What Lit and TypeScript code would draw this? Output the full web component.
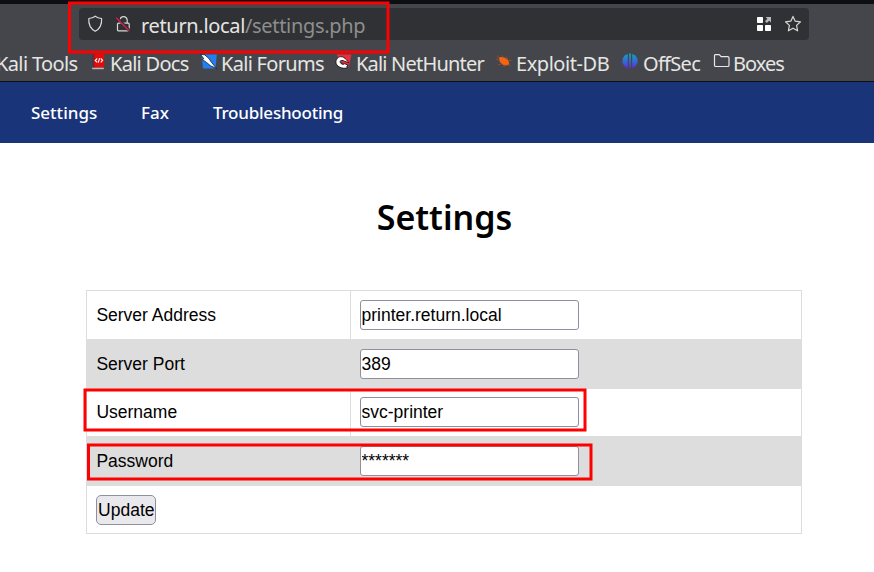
import { LitElement, html, css, svg } from "lit";
import { customElement } from "lit/decorators.js";

const icons: Record<string, unknown> = {
  docs: svg`<svg width="14" height="18" viewBox="0 0 14 18"><path d="M1 2.5 2.8 1v15L1 15.5z" fill="#18486a"/><path d="M1.2 14.5h11.6v1.7H1.2z" fill="#bbb"/><path d="M2.4 1h10.8v13.4H2.4z" fill="#e00d0b"/><path d="M2.4 1h1v13.4h-1z" fill="#9c1010"/><path d="M6.2 5.5 4.2 7.5l2 1.8M9.8 5.5l1.8 1.8-1.8 2M8.7 5.2 7.2 9.7" fill="none" stroke="#fff" stroke-width="1.1"/></svg>`,
  forums: svg`<svg width="17" height="18" viewBox="0 0 17 18"><path d="M1.5 1.5h15.3l-1.3 14H3z" fill="#237ff0"/><path d="m.4 1.2 4.4.7 4 3.5 2.6 3.8 5.2 6.4-6-2.8-4.4-3.6L2.2 6.5l1.7-.7z" fill="#fff" stroke="#152030" stroke-width=".8"/></svg>`,
  hunter: svg`<svg width="17" height="18" viewBox="0 0 17 18"><path d="M1.6 1.5h14.8l-2.6 12.8L5 8z" fill="#f02c3c"/><path d="M.9 8.8C1.3 4.9 5 2.2 8.6 4.4c2.4 1.4 4 3.5 5.1 5.4L9.8 8.3C7 6.6 4.4 7.6 5.3 9.4c.9 1.9 3 2.6 4.4 1.3l3.6 1.6-1.5.8.6 1.7C7 16.5.6 13.2.9 8.8z" fill="#fff" stroke="#17191c" stroke-width=".9"/></svg>`,
  exploit: svg`<svg width="16" height="18" viewBox="0 0 16 18"><path d="M3 4.2C6 3.4 10 4.5 12.4 7.3l1 4.4-4 .7C5.4 12 2.8 8.6 3 4.2z" fill="#f36413"/><path d="M1 2.8 4 5M.2 6l3.3.6M2 12l4-1.4M6 2.3l1.5 2.2M10.7 3.5l.4 2.7M12 7.5l3.3.1M7.5 14l2-2.5M12 11l2.2 2.5" fill="none" stroke="#a84b22" stroke-width=".9"/></svg>`,
  offsec: svg`<svg width="16" height="18" viewBox="0 0 16 18"><defs><linearGradient id="og" x1="0" y1="0" x2="0" y2="1"><stop stop-color="#12a5b8"/><stop offset=".55" stop-color="#3468d8"/><stop offset="1" stop-color="#6528cc"/></linearGradient></defs><path fill="url(#og)" d="M5.8 1v14.2L3 14.1.5 10V6L2.5 2.6zM7.1.4h1.8v15.2H7.1zM10.2 1l3.3 1.6 2 3.4v4L13 14.1l-2.8 1z"/></svg>`,
  folder: svg`<svg width="17" height="18" viewBox="0 0 17 18"><path d="M2.3 1.6h3.9l2 2h6.4q1.4 0 1.4 1.4v7.2q0 1.3-1.3 1.3H2.8q-1.3 0-1.3-1.3V2.6q0-1 .8-1z" fill="none" stroke="#e8e8e6" stroke-width="1.2"/></svg>`,
};

const bookmarks = [
  { icon: "", label: "Kali Tools", cls: "b0" },
  { icon: "docs", label: "Kali Docs", cls: "b1" },
  { icon: "forums", label: "Kali Forums", cls: "b2" },
  { icon: "hunter", label: "Kali NetHunter", cls: "b3" },
  { icon: "exploit", label: "Exploit-DB", cls: "b4" },
  { icon: "offsec", label: "OffSec", cls: "b5" },
  { icon: "folder", label: "Boxes", cls: "b6" },
];

const fields = [
  { label: "Server Address", value: "printer.return.local", cls: "r1" },
  { label: "Server Port", value: "389", cls: "r2 shade" },
  { label: "Username", value: "svc-printer", cls: "r3" },
  { label: "Password", value: "*******", cls: "r4 shade" },
];

@customElement("app-root")
export class AppRoot extends LitElement {
  static styles = css`
    :host { display: block; position: relative; width: 874px; height: 572px; overflow: hidden; background: #fff; font-family: "Liberation Sans", sans-serif; }
    * { box-sizing: border-box; }
    svg { display: block; flex: none; }
    .chrome { height: 82px; border-top: 4px solid #0e0f13; border-bottom: 1px solid #0e0f13; background: #44464c; padding-top: 4px; font: 20px/32px "Noto Sans", sans-serif; color: #e6e6e3; overflow: hidden; }
    .url { margin-left: 79px; width: 730px; height: 32px; border-radius: 4px; background: #303135; display: flex; align-items: center; padding: 0 7px 0 8px; white-space: nowrap; }
    .lock { margin-left: 11px; }
    .addr { margin-left: 9px; flex: 1; height: 32px; line-height: 35px; letter-spacing: -0.33px; }
    .path { color: #8e8e8f; }
    .grid { margin-right: 11px; }
    .marks { display: flex; height: 41px; white-space: nowrap; }
    .mark { display: flex; flex: none; padding-top: 13px; }
    .mark .t { line-height: 22px; }
    .b0 { width: 95px; margin-left: -4px; letter-spacing: -0.62px; }
    .b1 { width: 109px; gap: 5px; letter-spacing: -0.72px; }
    .b2 { width: 135px; gap: 4px; letter-spacing: -0.7px; }
    .b3 { width: 161px; gap: 4px; letter-spacing: -0.8px; }
    .b4 { width: 126px; gap: 4px; letter-spacing: -0.45px; }
    .b5 { width: 91px; gap: 5px; letter-spacing: -0.7px; }
    .b6 { gap: 3px; letter-spacing: -1px; }
    nav { height: 61px; background: #1a3479; display: flex; padding-left: 31px; color: #fff; font: 500 17px/61px "Noto Sans", sans-serif; }
    .n1 { width: 110px; } .n2 { width: 72px; } .n3 { letter-spacing: -0.23px; }
    h1 { margin: 51px 0 0 15px; height: 96px; text-align: center; font: 600 34px/46px "Noto Sans", sans-serif; color: #000; }
    .table { margin-left: 86px; width: 716px; height: 244px; border: 1px solid #ddd; font-size: 17.5px; line-height: 30px; color: #000; }
    .row { display: grid; grid-template-columns: 264px 1fr; }
    .label { padding-left: 9.4px; border-right: 1px solid #ddd; }
    .cell { padding-left: 9px; }
    .r1 { height: 48px; --p: 9px; }
    .r2 { height: 50px; --p: 10px; }
    .r3 { height: 47px; --p: 8px; }
    .r4 { height: 50px; --p: 10px; }
    .label, .cell { padding-top: var(--p); }
    .shade { background: #ddd; }
    .input { display: block; width: 219px; height: 30px; padding: 0 0 0 0.5px; margin: 0; border: 1px solid #8f8f9d; border-radius: 3px; background: #fff; color: #000; font: inherit; line-height: 28px; outline: none; }
    .last { padding: 9px; }
    button { display: block; width: 60px; height: 30px; padding: 0 0 0 0.6px; border: 1px solid #8f8f9d; border-radius: 5px; background: #e9e9ed; color: #000; font: inherit; line-height: 28px; white-space: nowrap; }
    .notes { position: absolute; inset: 0; pointer-events: none; }
  `;

  render() {
    return html`
      <div class="chrome">
        <div class="url">
          <svg width="17" height="18" viewBox="0 0 17 18"><path d="M8.2 1.2c2 1.5 4 2 6.4 2.3.4 5.5-1.3 10-6.4 12.8C3.1 13.5 1.4 9 1.8 3.5c2.4-.3 4.4-.8 6.4-2.3z" fill="none" stroke="#d8d8d5" stroke-width="1.2" stroke-linejoin="round"/></svg>
          <svg class="lock" width="17" height="18" viewBox="0 0 17 18"><path d="M5.2 8V5.2a3.5 3.5 0 0 1 7 0V8M3.6 8.2h9.6q1 0 1 1v5.6q0 1-1 1H3.5q-1 0-1-1V9.2q0-1 1-1z" fill="none" stroke="#d8d8d5" stroke-width="1.2"/><path d="m1.8 2.5 13 13.5" stroke="#303135" stroke-width="3"/><path d="m1.3 2.8 13 13.2" stroke="#e11a4c" stroke-width="1.3"/></svg>
          <div class="addr"><span class="host">return.local</span><span class="path">/settings.php</span></div>
          <svg class="grid" width="16" height="16" viewBox="0 0 16 16"><rect x="0" y="1" width="6" height="6" rx=".7" fill="#fff"/><rect x="0" y="9" width="6" height="6" rx=".7" fill="#fff"/><rect x="8" y="9" width="6" height="6" rx=".7" fill="#fff"/><path d="M8.5 1H14v5.5l-1.8-1.8L9.8 7 8 5.2l2.4-2.4z" fill="#bababa"/></svg>
          <svg width="18" height="18" viewBox="0 0 18 18"><path d="m9 1.4 2.2 4.8 5.3.6-3.9 3.6 1 5.4L9 13.2l-4.6 2.6 1-5.4-3.9-3.6 5.3-.6z" fill="none" stroke="#d8d8d5" stroke-width="1.2" stroke-linejoin="round"/></svg>
        </div>
        <div class="marks">
          ${bookmarks.map((b) => html`<div class="mark ${b.cls}">${b.icon ? icons[b.icon] : ""}<span class="t">${b.label}</span></div>`)}
        </div>
      </div>
      <nav><span class="n1">Settings</span><span class="n2">Fax</span><span class="n3">Troubleshooting</span></nav>
      <h1>Settings</h1>
      <div class="table">
        ${fields.map((f) => html`<div class="row ${f.cls}"><div class="label">${f.label}</div><div class="cell"><input class="input" .value=${f.value} /></div></div>`)}
        <div class="last"><button>Update</button></div>
      </div>
      <svg class="notes" width="874" height="572" fill="none" stroke="#f00" stroke-width="3">
        <rect x="69.5" y="3" width="318.5" height="49" />
        <rect x="85" y="390" width="500" height="40" />
        <rect x="88.5" y="445" width="502.5" height="34" />
      </svg>
    `;
  }
}
